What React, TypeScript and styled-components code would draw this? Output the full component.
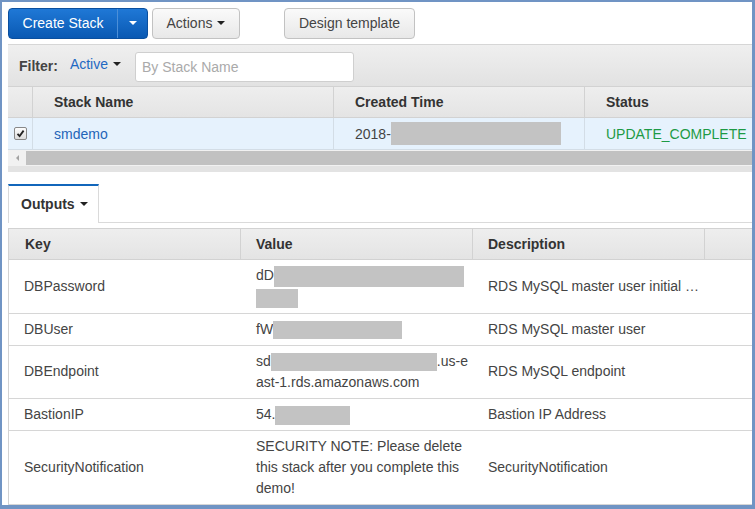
import React from "react";
import styled, { createGlobalStyle } from "styled-components";

const GlobalStyle = createGlobalStyle`
  html, body { margin: 0; padding: 0; }
  body {
    background: #7094c4;
    font-family: "Liberation Sans", Arial, sans-serif;
    font-size: 14px;
    color: #444;
  }
`;

const Frame = styled.div`
  width: 755px;
  height: 509px;
  box-sizing: border-box;
  padding: 2px 3px 4px 2px;
`;

const Panel = styled.div`
  background: #fff;
  height: 503px;
  padding-left: 6px;
  overflow: hidden;
`;

const Toolbar = styled.div`
  display: flex;
  align-items: flex-start;
  gap: 4px;
  height: 42px;
  padding-top: 6px;
  box-sizing: border-box;
`;

const SplitButton = styled.div`
  display: flex;
  height: 31px;
  border-radius: 4px;
  overflow: hidden;
  border: 1px solid #0a4f9f;
  box-sizing: border-box;
  background: linear-gradient(#1f78d6, #0a59b3);
`;

const PrimaryPart = styled.button`
  all: unset;
  color: #fff;
  font-size: 14px;
  width: 109px;
  white-space: nowrap;
  box-sizing: border-box;
  text-align: center;
  line-height: 29px;
  border-right: 1px solid #4c8fd8;
`;

const CaretPart = styled.button`
  all: unset;
  width: 29px;
  display: flex;
  align-items: center;
  justify-content: center;
`;

const Caret = styled.span<{ $color?: string; $ml?: number }>`
  display: inline-block;
  width: 0;
  height: 0;
  border-left: 4px solid transparent;
  border-right: 4px solid transparent;
  border-top: 4px solid ${(p) => p.$color || "#222"};
  margin-left: ${(p) => p.$ml ?? 5}px;
  vertical-align: middle;
  position: relative;
  top: -1px;
`;

const GrayButton = styled.button<{ $w: number; $ml?: number }>`
  all: unset;
  width: ${(p) => p.$w}px;
  margin-left: ${(p) => p.$ml || 0}px;
  height: 31px;
  white-space: nowrap;
  box-sizing: border-box;
  border: 1px solid #c2c2c2;
  border-radius: 4px;
  background: linear-gradient(#fafafa, #e8e8e8);
  color: #444;
  font-size: 14px;
  text-align: center;
  line-height: 29px;
`;

const FilterBar = styled.div`
  height: 42px;
  box-sizing: border-box;
  border-top: 1px solid #d6d6d6;
  background: linear-gradient(#efefef, #e2e2e2);
  display: flex;
  align-items: center;
  padding-left: 11px;
`;

const FilterLabel = styled.span`
  font-weight: bold;
  color: #444;
`;

const FilterLink = styled.span`
  color: #1e68c2;
  margin-left: 12px;
  position: relative;
  top: -2px;
`;

const SearchInput = styled.input`
  margin-left: 14px;
  width: 219px;
  height: 30px;
  box-sizing: border-box;
  border: 1px solid #cfcfcf;
  border-radius: 3px;
  padding: 0 6px;
  font-family: "Liberation Sans", Arial, sans-serif;
  font-size: 14px;
  margin-top: 2px;
  &::placeholder { color: #aaa; }
`;

const StackGrid = styled.div`
  display: grid;
  grid-template-columns: 25px 301px 251px 1fr;
`;

const HeadCell = styled.div<{ $pl?: number; $last?: boolean }>`
  height: 32px;
  box-sizing: border-box;
  background: linear-gradient(#eeeeee, #e4e4e4);
  border-top: 1px solid #d2d2d2;
  border-bottom: 1px solid #d2d2d2;
  border-right: ${(p) => (p.$last ? "none" : "1px solid #d2d2d2")};
  font-weight: bold;
  color: #333;
  padding-left: ${(p) => p.$pl ?? 21}px;
  line-height: 30px;
  white-space: nowrap;
  overflow: hidden;
`;

const SelCell = styled.div<{ $color?: string; $last?: boolean; $pl?: number }>`
  height: 32px;
  box-sizing: border-box;
  background: #e6f2fd;
  border-bottom: 1px solid #d3dde6;
  border-right: ${(p) => (p.$last ? "none" : "1px solid #d3dde6")};
  color: ${(p) => p.$color || "#444"};
  padding-left: ${(p) => p.$pl ?? 21}px;
  display: flex;
  align-items: center;
  white-space: nowrap;
  overflow: hidden;
`;

const Check = styled.span`
  width: 11px;
  height: 11px;
  border: 1px solid #888;
  border-radius: 2px;
  background: linear-gradient(#fdfdfd, #dcdcdc);
  display: flex;
  align-items: center;
  justify-content: center;
`;

const Redact = styled.span<{ $w: number; $h?: number }>`
  display: inline-block;
  width: ${(p) => p.$w}px;
  height: ${(p) => p.$h ?? 19}px;
  background: #c3c3c3;
  vertical-align: middle;
`;

const ScrollBar = styled.div`
  display: flex;
  height: 16px;
  background: #f1f1f1;
`;

const ScrollArrow = styled.div`
  width: 18px;
  display: flex;
  align-items: center;
  justify-content: center;
  &::before {
    content: "";
    border-top: 3px solid transparent;
    border-bottom: 3px solid transparent;
    border-right: 3px solid #a3a3a3;
  }
`;

const ScrollThumb = styled.div`
  flex: 1;
  margin: 1px 0;
  background: #c1c1c1;
`;

const ScrollFoot = styled.div`
  height: 6px;
  background: #e3e3e3;
`;

const TabStrip = styled.div`
  margin-top: 12px;
  display: flex;
  border-bottom: 1px solid #dadada;
  height: 38px;
`;

const Tab = styled.div`
  width: 91px;
  height: 39px;
  box-sizing: border-box;
  border-top: 2px solid #1166bb;
  border-left: 1px solid #dadada;
  border-right: 1px solid #dadada;
  background: #fff;
  font-weight: bold;
  color: #333;
  padding-left: 12px;
  line-height: 36px;
`;

const OutGrid = styled.div`
  margin-top: 5px;
  display: grid;
  grid-template-columns: 232px 232px 232px 1fr;
  border-left: 1px solid #d2d2d2;
`;

const OutCell = styled.div<{ $pl?: number }>`
  box-sizing: border-box;
  border-bottom: 1px solid #d6d6d6;
  padding: 5px 2px 5px ${(p) => p.$pl ?? 15}px;
  line-height: 21px;
  color: #444;
  display: flex;
  align-items: center;
  min-width: 0;
`;

const CellText = styled.div`
  white-space: nowrap;
`;

type Row = { key: string; value: React.ReactNode; desc: string };

const rows: Row[] = [
  {
    key: "DBPassword",
    value: (
      <>
        dD<Redact $w={190} $h={21} />
        <br />
        <Redact $w={42} $h={19} />
      </>
    ),
    desc: "RDS MySQL master user initial …",
  },
  { key: "DBUser", value: <>fW<Redact $w={129} $h={18} /></>, desc: "RDS MySQL master user" },
  {
    key: "DBEndpoint",
    value: (
      <>
        sd<Redact $w={166} $h={18} />.us-e
        <br />
        ast-1.rds.amazonaws.com
      </>
    ),
    desc: "RDS MySQL endpoint",
  },
  { key: "BastionIP", value: <>54.<Redact $w={75} $h={19} /></>, desc: "Bastion IP Address" },
  {
    key: "SecurityNotification",
    value: (
      <>
        SECURITY NOTE: Please delete
        <br />
        this stack after you complete this
        <br />
        demo!
      </>
    ),
    desc: "SecurityNotification",
  },
];

export default function App() {
  return (
    <>
      <GlobalStyle />
      <Frame>
        <Panel>
          <Toolbar>
            <SplitButton>
              <PrimaryPart>Create Stack</PrimaryPart>
              <CaretPart>
                <Caret $color="#fff" $ml={0} />
              </CaretPart>
            </SplitButton>
            <GrayButton $w={88}>
              Actions<Caret />
            </GrayButton>
            <GrayButton $w={131} $ml={40}>
              Design template
            </GrayButton>
          </Toolbar>

          <FilterBar>
            <FilterLabel>Filter:</FilterLabel>
            <FilterLink>
              Active<Caret />
            </FilterLink>
            <SearchInput placeholder="By Stack Name" />
          </FilterBar>

          <StackGrid>
            <HeadCell $pl={0} />
            <HeadCell>Stack Name</HeadCell>
            <HeadCell>Created Time</HeadCell>
            <HeadCell $last>Status</HeadCell>
            <SelCell $pl={6}>
              <Check>
                <svg width="9" height="9" viewBox="0 0 9 9">
                  <path d="M1.5 4.8 L3.6 7 L7.6 1.6" stroke="#222" strokeWidth="1.8" fill="none" />
                </svg>
              </Check>
            </SelCell>
            <SelCell $color="#1f65b8">smdemo</SelCell>
            <SelCell>
              2018-<Redact $w={170} $h={23} />
            </SelCell>
            <SelCell $color="#1d9a45" $last>
              UPDATE_COMPLETE
            </SelCell>
          </StackGrid>

          <ScrollBar>
            <ScrollArrow />
            <ScrollThumb />
          </ScrollBar>
          <ScrollFoot />

          <TabStrip>
            <Tab>
              Outputs<Caret />
            </Tab>
          </TabStrip>

          <OutGrid>
            <HeadCell $pl={16}>Key</HeadCell>
            <HeadCell $pl={15}>Value</HeadCell>
            <HeadCell $pl={15}>Description</HeadCell>
            <HeadCell $pl={0} $last />
            {rows.map((r) => (
              <React.Fragment key={r.key}>
                <OutCell $pl={15}>
                  <CellText>{r.key}</CellText>
                </OutCell>
                <OutCell $pl={15}>
                  <CellText>{r.value}</CellText>
                </OutCell>
                <OutCell $pl={15}>
                  <CellText>{r.desc}</CellText>
                </OutCell>
                <OutCell $pl={0} />
              </React.Fragment>
            ))}
          </OutGrid>
        </Panel>
      </Frame>
    </>
  );
}
